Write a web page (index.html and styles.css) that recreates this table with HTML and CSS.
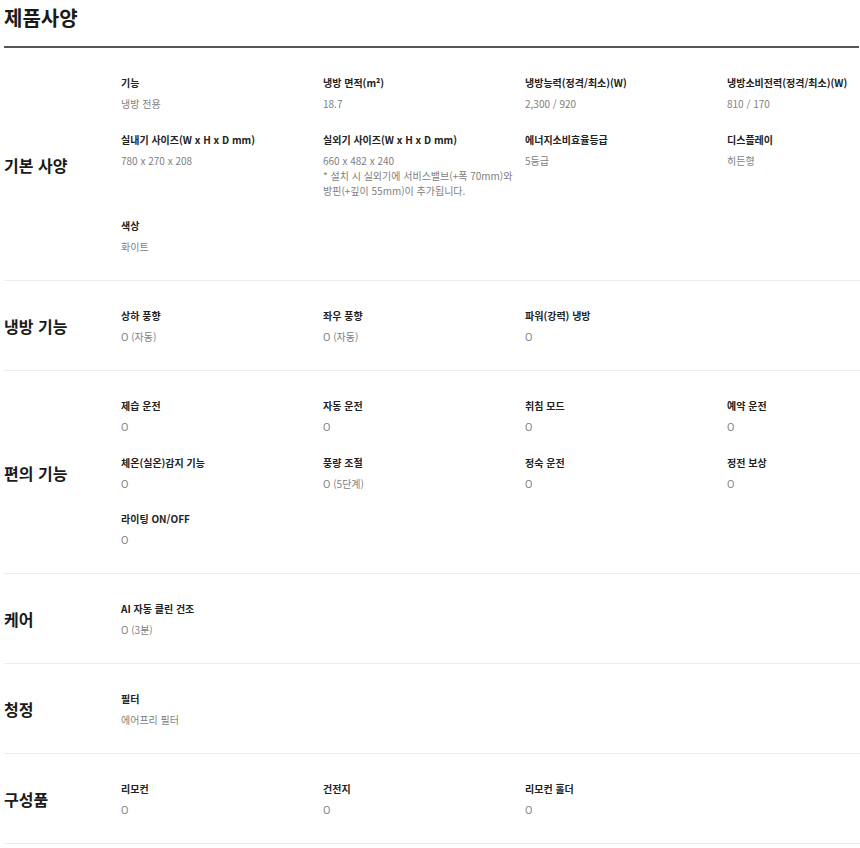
FILE: index.html
```html
<!DOCTYPE html>
<html lang="ko">
<head>
<meta charset="utf-8">
<title>제품사양</title>
<link rel="stylesheet" href="styles.css">
</head>
<body>
<div class="spec">
  <h2 class="spec-title">제품사양</h2>
  <div class="spec-body">
    <section class="group">
      <h3 class="group-name">기본 사양</h3>
      <div class="items">
        <div class="item"><p class="item-label">기능</p><p class="item-value">냉방 전용</p></div>
        <div class="item"><p class="item-label">냉방 면적(m²)</p><p class="item-value">18.7</p></div>
        <div class="item"><p class="item-label">냉방능력(정격/최소)(W)</p><p class="item-value">2,300 / 920</p></div>
        <div class="item"><p class="item-label">냉방소비전력(정격/최소)(W)</p><p class="item-value">810 / 170</p></div>
        <div class="item"><p class="item-label">실내기 사이즈(W x H x D mm)</p><p class="item-value">780 x 270 x 208</p></div>
        <div class="item"><p class="item-label">실외기 사이즈(W x H x D mm)</p><p class="item-value">660 x 482 x 240<br>* 설치 시 실외기에 서비스밸브(+폭 70mm)와<br>방핀(+깊이 55mm)이 추가됩니다.</p></div>
        <div class="item"><p class="item-label">에너지소비효율등급</p><p class="item-value">5등급</p></div>
        <div class="item"><p class="item-label">디스플레이</p><p class="item-value">히든형</p></div>
        <div class="item"><p class="item-label">색상</p><p class="item-value">화이트</p></div>
      </div>
    </section>
    <section class="group">
      <h3 class="group-name">냉방 기능</h3>
      <div class="items">
        <div class="item"><p class="item-label">상하 풍향</p><p class="item-value">O (자동)</p></div>
        <div class="item"><p class="item-label">좌우 풍향</p><p class="item-value">O (자동)</p></div>
        <div class="item"><p class="item-label">파워(강력) 냉방</p><p class="item-value">O</p></div>
      </div>
    </section>
    <section class="group">
      <h3 class="group-name">편의 기능</h3>
      <div class="items">
        <div class="item"><p class="item-label">제습 운전</p><p class="item-value">O</p></div>
        <div class="item"><p class="item-label">자동 운전</p><p class="item-value">O</p></div>
        <div class="item"><p class="item-label">취침 모드</p><p class="item-value">O</p></div>
        <div class="item"><p class="item-label">예약 운전</p><p class="item-value">O</p></div>
        <div class="item"><p class="item-label">체온(실온)감지 기능</p><p class="item-value">O</p></div>
        <div class="item"><p class="item-label">풍량 조절</p><p class="item-value">O (5단계)</p></div>
        <div class="item"><p class="item-label">정숙 운전</p><p class="item-value">O</p></div>
        <div class="item"><p class="item-label">정전 보상</p><p class="item-value">O</p></div>
        <div class="item"><p class="item-label">라이팅 ON/OFF</p><p class="item-value">O</p></div>
      </div>
    </section>
    <section class="group">
      <h3 class="group-name">케어</h3>
      <div class="items">
        <div class="item"><p class="item-label">AI 자동 클린 건조</p><p class="item-value">O (3분)</p></div>
      </div>
    </section>
    <section class="group">
      <h3 class="group-name">청정</h3>
      <div class="items">
        <div class="item"><p class="item-label">필터</p><p class="item-value">에어프리 필터</p></div>
      </div>
    </section>
    <section class="group">
      <h3 class="group-name">구성품</h3>
      <div class="items">
        <div class="item"><p class="item-label">리모컨</p><p class="item-value">O</p></div>
        <div class="item"><p class="item-label">건전지</p><p class="item-value">O</p></div>
        <div class="item"><p class="item-label">리모컨 홀더</p><p class="item-value">O</p></div>
      </div>
    </section>
  </div>
</div>
</body>
</html>
```
FILE: styles.css
```css
html, body {
  margin: 0;
  padding: 0;
  background: #fff;
}
body {
  font-family: "Noto Sans CJK KR", "Noto Sans", sans-serif;
  color: #222;
  overflow: hidden;
}
.spec {
  margin: 0 1px 0 4px;
}
.spec-title {
  margin: 0;
  padding-top: 4px;
  font-size: 20px;
  line-height: 28px;
  font-weight: 700;
  color: #1a1a1a;
  border-bottom: 2px solid #555;
  padding-bottom: 14px;
}
.spec-body {
  margin-right: -1px;
}
.group {
  display: grid;
  grid-template-columns: 117px 1fr;
  align-items: center;
  padding: 27px 0 26px;
  border-bottom: 1px solid #ededed;
}
.group-name {
  margin: 0;
  font-size: 16px;
  line-height: 22px;
  font-weight: 700;
  color: #1a1a1a;
}
.items {
  display: grid;
  grid-template-columns: 202px 202px 202px 1fr;
  row-gap: 20.5px;
}
.item-label {
  margin: 0 0 5px;
  font-size: 10px;
  line-height: 16px;
  font-weight: 700;
  color: #222;
  white-space: nowrap;
}
.item-value {
  margin: 0;
  font-size: 10px;
  line-height: 15px;
  color: #808080;
  white-space: nowrap;
}
```
